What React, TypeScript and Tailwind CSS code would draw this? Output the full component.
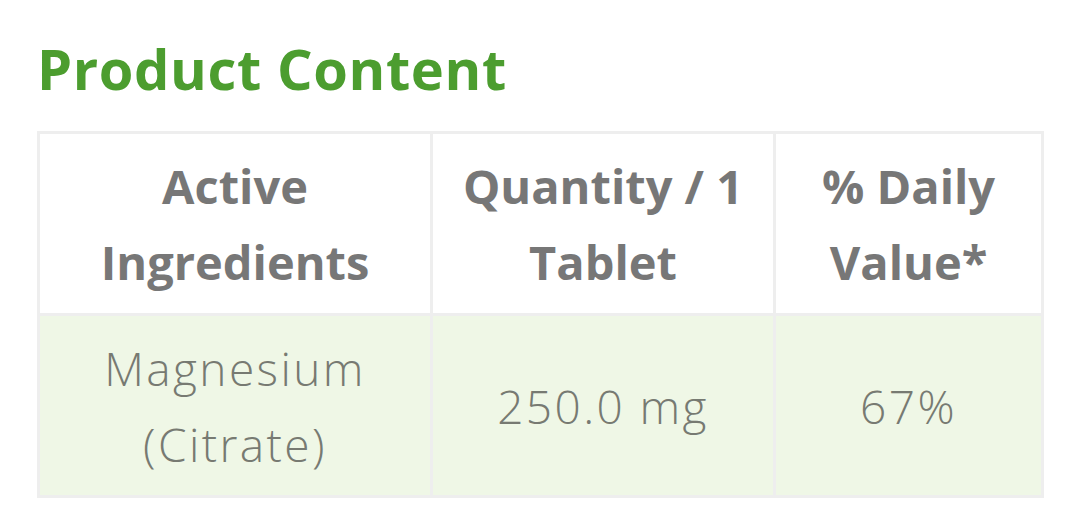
const rows = [
  { name: ["Magnesium", "(Citrate)"], quantity: "250.0 mg", daily: "67%" },
];

export default function App() {
  return (
    <div className="min-h-[530px] w-[1069px] bg-white pl-[37px] pr-[26px] pt-[36px] font-['Open_Sans',sans-serif]">
      <h2 className="text-[56px] font-bold leading-[64px] tracking-[0.6px] text-[#4c9d2f]">Product Content</h2>
      <table className="mt-[31px] w-[1004px] table-fixed border-collapse border-[3px] border-[#eeeeee]">
        <thead>
          <tr className="bg-white text-[#777777]">
            <th className="h-[182px] w-[393px] border-[3px] border-[#eeeeee] px-2 text-[47px] font-bold leading-[76px]">
              Active
              <br />
              Ingredients
            </th>
            <th className="w-[343px] border-[3px] border-[#eeeeee] px-2 text-[47px] font-bold leading-[76px]">
              Quantity / 1
              <br />
              Tablet
            </th>
            <th className="w-[268px] border-[3px] border-[#eeeeee] px-2 text-[47px] font-bold leading-[76px]">
              % Daily
              <br />
              Value*
            </th>
          </tr>
        </thead>
        <tbody>
          {rows.map((row) => (
            <tr key={row.quantity} className="bg-[#eff7e6] text-center text-[#777a72]">
              <td className="h-[182px] border-[3px] border-[#eeeeee] px-2 text-[46px] font-light leading-[76px] tracking-[2.4px]">
                {row.name[0]}
                <br />
                {row.name[1]}
              </td>
              <td className="border-[3px] border-[#eeeeee] px-2 text-[46px] font-light leading-[76px] tracking-[2.4px]">{row.quantity}</td>
              <td className="border-[3px] border-[#eeeeee] px-2 text-[46px] font-light leading-[76px] tracking-[2.4px]">{row.daily}</td>
            </tr>
          ))}
        </tbody>
      </table>
    </div>
  );
}
